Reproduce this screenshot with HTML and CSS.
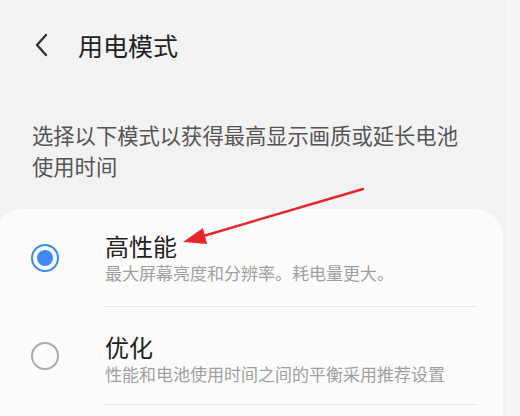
FILE: index.html
```html
<!DOCTYPE html>
<html lang="zh-CN">
<head>
<meta charset="utf-8">
<link rel="stylesheet" href="styles.css">
</head>
<body>
<div class="screen">
  <header class="topbar">
    <svg class="back" width="16" height="24" viewBox="0 0 16 24"><path d="M12 2 L3 12 L12 22" fill="none" stroke="#333" stroke-width="2.4" stroke-linecap="round" stroke-linejoin="round"/></svg>
    <h1 class="title">用电模式</h1>
  </header>
  <p class="desc">选择以下模式以获得最高显示画质或延长电池使用时间</p>
  <div class="card">
    <div class="item">
      <span class="radio checked"></span>
      <div class="text">
        <div class="name">高性能</div>
        <div class="sub">最大屏幕亮度和分辨率。耗电量更大。</div>
      </div>
    </div>
    <div class="item">
      <span class="radio"></span>
      <div class="text">
        <div class="name">优化</div>
        <div class="sub">性能和电池使用时间之间的平衡采用推荐设置</div>
      </div>
    </div>
  </div>
  <div class="side-strip"></div>
  <svg class="arrow" width="520" height="416" viewBox="0 0 520 416">
    <line x1="363" y1="189" x2="200" y2="237" stroke="#e5262b" stroke-width="2.4" stroke-linecap="round"/>
    <polygon points="183,242 203,228 207,244" fill="#e5262b"/>
  </svg>
</div>
</body>
</html>
```

FILE: styles.css
```css
html, body {
  margin: 0;
  padding: 0;
}
body {
  background: #f2f2f2;
  font-family: "Noto Sans CJK SC", "Noto Sans", sans-serif;
  width: 520px;
  height: 416px;
  overflow: hidden;
}
.screen {
  position: relative;
  width: 520px;
  height: 416px;
  overflow: hidden;
}
.topbar {
  height: 90px;
  display: flex;
  align-items: center;
  padding-left: 34px;
  box-sizing: border-box;
}
.back {
  display: block;
}
.title {
  margin: 0 0 0 28px;
  font-size: 25px;
  font-weight: 400;
  color: #222;
  line-height: 30px;
}
.desc {
  margin: 29px 0 0;
  padding: 0 56px 0 32px;
  font-size: 21.3px;
  line-height: 31px;
  color: #555;
  height: 90px;
}
.card {
  margin-left: -6px;
  width: 509px;
  background: #fcfcfc;
  border-radius: 28px 28px 0 0;
  height: 220px;
}
.item {
  display: flex;
  align-items: center;
}
.radio {
  width: 24px;
  height: 24px;
  border-radius: 50%;
  border: 2px solid #aaa;
  margin-left: 37px;
  margin-right: 46px;
  flex: none;
  position: relative;
}
.radio.checked {
  border-color: #3d8af7;
}
.radio.checked::after {
  content: "";
  position: absolute;
  left: 4px;
  top: 4px;
  width: 16px;
  height: 16px;
  border-radius: 50%;
  background: #3d8af7;
}
.text {
  width: 372px;
  padding: 22px 0 21px;
  border-bottom: 1px solid #e5e5e5;
}
.item + .item .text {
  padding-top: 25px;
  padding-bottom: 18px;
}
.name {
  font-size: 24px;
  line-height: 30px;
  color: #222;
}
.sub {
  font-size: 17px;
  line-height: 24px;
  color: #a0a0a0;
  white-space: nowrap;
}
.side-strip {
  position: absolute;
  right: 0;
  top: 0;
  width: 14px;
  height: 416px;
  background: #f5f5f5;
}
.arrow {
  position: absolute;
  left: 0;
  top: 0;
}
```
